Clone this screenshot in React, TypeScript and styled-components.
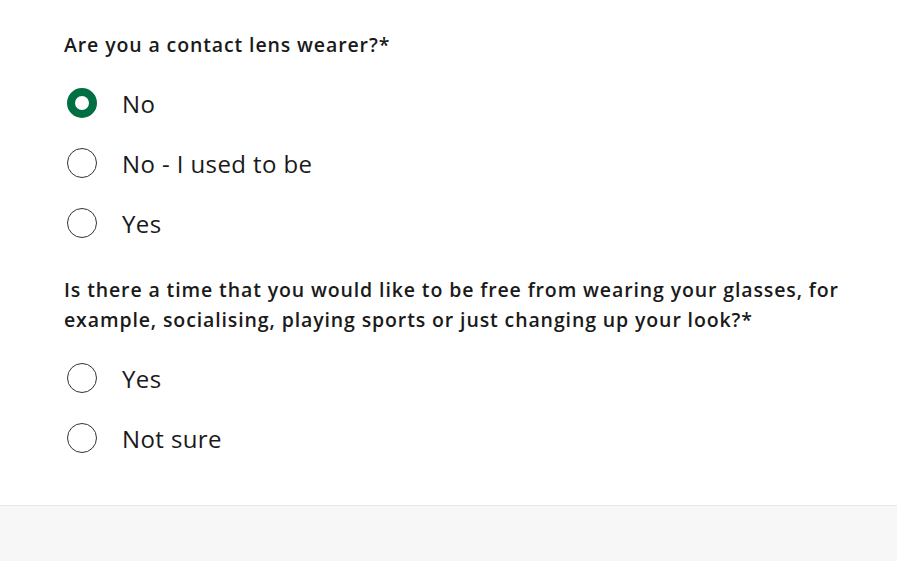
import React, { useState } from "react";
import styled, { createGlobalStyle } from "styled-components";

const GlobalStyle = createGlobalStyle`
  html, body {
    margin: 0;
    padding: 0;
    background: #ffffff;
    font-family: "Open Sans", Lato, Arial, sans-serif;
    color: #1d1d1d;
  }
`;

type Question = {
  id: string;
  label: string;
  options: string[];
};

const questions: Question[] = [
  {
    id: "contact",
    label: "Are you a contact lens wearer?*",
    options: ["No", "No - I used to be", "Yes"],
  },
  {
    id: "free",
    label:
      "Is there a time that you would like to be free from wearing your glasses, for example, socialising, playing sports or just changing up your look?*",
    options: ["Yes", "Not sure"],
  },
];

const App = () => {
  const [values, setValues] = useState<Record<string, string>>({
    contact: "No",
  });

  return (
    <>
      <GlobalStyle />
      <Page>
        <Form>
          {questions.map((q) => (
            <Fieldset key={q.id}>
              <Legend>{q.label}</Legend>
              <Options>
                {q.options.map((opt) => (
                  <Option key={opt}>
                    <HiddenInput
                      type="radio"
                      name={q.id}
                      checked={values[q.id] === opt}
                      onChange={() => setValues({ ...values, [q.id]: opt })}
                    />
                    <Dot $checked={values[q.id] === opt} />
                    <OptionText>{opt}</OptionText>
                  </Option>
                ))}
              </Options>
            </Fieldset>
          ))}
        </Form>
        <Footer />
      </Page>
    </>
  );
};

const Page = styled.div`
  min-height: 561px;
  display: flex;
  flex-direction: column;
`;

const Form = styled.div`
  padding: 30px 40px 0 64px;
  height: 474px;
  box-sizing: border-box;
  display: flex;
  flex-direction: column;
  gap: 37px;
`;

const Fieldset = styled.div`
  display: flex;
  flex-direction: column;
`;

const Legend = styled.div`
  font-size: 19.5px;
  font-weight: 600;
  line-height: 30px;
  letter-spacing: 0.88px;
  color: #1a1a1a;
  margin-bottom: 28px;
`;

const Options = styled.div`
  display: flex;
  flex-direction: column;
  gap: 30px;
`;

const Option = styled.label`
  display: flex;
  align-items: center;
  gap: 25px;
  height: 30px;
  padding-left: 3px;
  cursor: pointer;
`;

const HiddenInput = styled.input`
  position: absolute;
  opacity: 0;
  width: 0;
  height: 0;
`;

const Dot = styled.span<{ $checked: boolean }>`
  width: 30px;
  height: 30px;
  box-sizing: border-box;
  border-radius: 50%;
  flex-shrink: 0;
  background: #fff;
  border: ${({ $checked }) => ($checked ? "8px solid #006f41" : "1px solid #333")};
`;

const OptionText = styled.span`
  font-size: 24px;
  font-weight: 400;
  letter-spacing: 0.4px;
  color: #1a1a1a;
`;

const Footer = styled.div`
  flex: 1;
  margin-top: 31px;
  background: #f7f7f7;
  border-top: 1px solid #e6e6e6;
`;

export default App;
